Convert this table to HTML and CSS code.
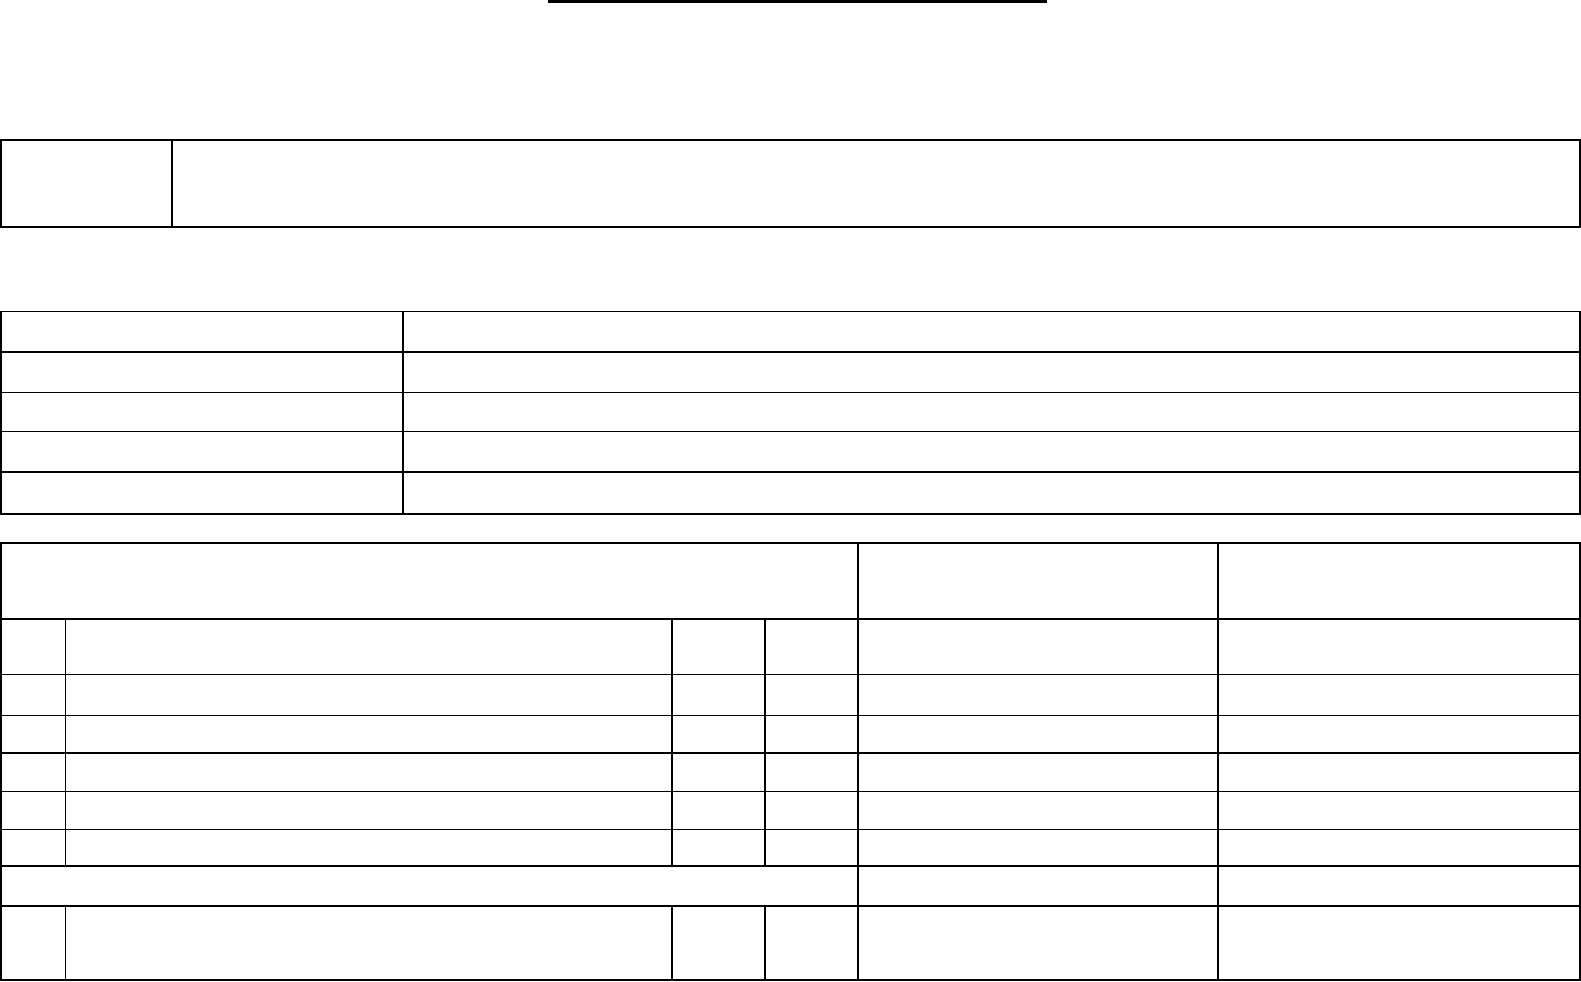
FILE: index.html
```html
<!DOCTYPE html>
<html lang="en">
<head>
<meta charset="utf-8">
<title>Form</title>
<link rel="stylesheet" href="styles.css">
</head>
<body>
<div class="title-rule"></div>

<div class="box-one">
  <div class="one-label"></div>
  <div class="one-value"></div>
</div>

<div class="box-two">
  <div class="two-row thick"><div class="two-label"></div><div class="two-value"></div></div>
  <div class="two-row thin"><div class="two-label"></div><div class="two-value"></div></div>
  <div class="two-row thin"><div class="two-label"></div><div class="two-value"></div></div>
  <div class="two-row thick"><div class="two-label"></div><div class="two-value"></div></div>
  <div class="two-row thick last"><div class="two-label"></div><div class="two-value"></div></div>
</div>

<div class="box-three">
  <div class="row head thick">
    <div class="c-span"></div><div class="c-a"></div><div class="c-b"></div>
  </div>
  <div class="row r-a thin">
    <div class="c-n"></div><div class="c-d"></div><div class="c-q"></div><div class="c-u"></div><div class="c-a"></div><div class="c-b"></div>
  </div>
  <div class="row r-b thin">
    <div class="c-n"></div><div class="c-d"></div><div class="c-q"></div><div class="c-u"></div><div class="c-a"></div><div class="c-b"></div>
  </div>
  <div class="row r-c thick">
    <div class="c-n"></div><div class="c-d"></div><div class="c-q"></div><div class="c-u"></div><div class="c-a"></div><div class="c-b"></div>
  </div>
  <div class="row r-d thin">
    <div class="c-n"></div><div class="c-d"></div><div class="c-q"></div><div class="c-u"></div><div class="c-a"></div><div class="c-b"></div>
  </div>
  <div class="row r-e thin">
    <div class="c-n"></div><div class="c-d"></div><div class="c-q"></div><div class="c-u"></div><div class="c-a"></div><div class="c-b"></div>
  </div>
  <div class="row r-f thick">
    <div class="c-n"></div><div class="c-d"></div><div class="c-q"></div><div class="c-u"></div><div class="c-a"></div><div class="c-b"></div>
  </div>
  <div class="row r-g thick">
    <div class="c-span"></div><div class="c-a"></div><div class="c-b"></div>
  </div>
  <div class="row r-h thick">
    <div class="c-n"></div><div class="c-d"></div><div class="c-q"></div><div class="c-u"></div><div class="c-a"></div><div class="c-b"></div>
  </div>
</div>
</body>
</html>
```

FILE: styles.css
```css
* {
  box-sizing: border-box;
}

html, body {
  margin: 0;
  padding: 0;
  background: #fff;
  font-family: "Liberation Sans", Arial, sans-serif;
  color: #000;
}

body {
  width: 1581px;
}

.title-rule {
  width: 499px;
  height: 3px;
  margin-left: 548px;
  background: #000;
}

/* Box one */
.box-one {
  margin-top: 136px;
  height: 89px;
  display: flex;
  border: 2px solid #000;
}

.one-label {
  width: 171px;
  border-right: 2px solid #000;
}

.one-value {
  flex: 1;
}

/* Box two */
.box-two {
  margin-top: 83px;
  border-top: 1px solid #000;
  border-left: 2px solid #000;
  border-right: 2px solid #000;
}

.two-row {
  display: flex;
}

.two-row.thick {
  border-bottom: 2px solid #000;
}

.two-row.thin {
  border-bottom: 1px solid #000;
}

.two-row:nth-child(1) { height: 41px; }
.two-row:nth-child(2) { height: 40px; }
.two-row:nth-child(3) { height: 39px; }
.two-row:nth-child(4) { height: 41px; }
.two-row:nth-child(5) { height: 42px; }

.two-label {
  width: 402px;
  border-right: 2px solid #000;
}

.two-value {
  flex: 1;
}

/* Box three */
.box-three {
  margin-top: 27px;
  border-top: 2px solid #000;
  border-left: 2px solid #000;
  border-right: 2px solid #000;
}

.row {
  display: flex;
}

.row.thick {
  border-bottom: 2px solid #000;
}

.row.thin {
  border-bottom: 1px solid #000;
}

.row.head { height: 76px; }
.row.r-a { height: 55px; }
.row.r-b { height: 41px; }
.row.r-c { height: 38px; }
.row.r-d { height: 38px; }
.row.r-e { height: 38px; }
.row.r-f { height: 37px; }
.row.r-g { height: 40px; }
.row.r-h { height: 74px; }

.c-span {
  width: 857px;
  border-right: 2px solid #000;
}

.c-n {
  width: 64px;
  border-right: 1px solid #000;
}

.c-d {
  width: 607px;
  border-right: 2px solid #000;
}

.c-q {
  width: 93px;
  border-right: 2px solid #000;
}

.c-u {
  width: 93px;
  border-right: 2px solid #000;
}

.c-a {
  width: 360px;
  border-right: 2px solid #000;
}

.c-b {
  flex: 1;
}
```
